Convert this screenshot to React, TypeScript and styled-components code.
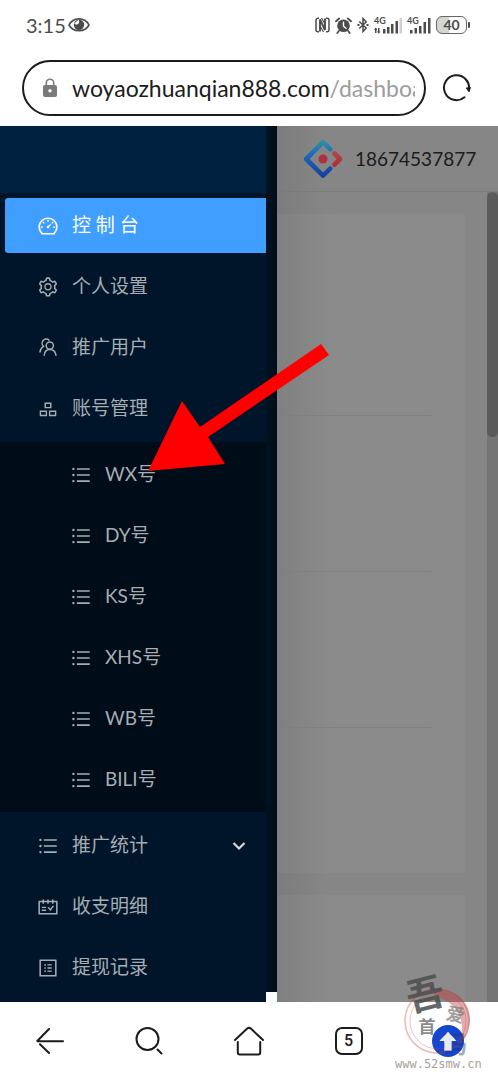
import React from "react";
import styled, { createGlobalStyle } from "styled-components";
import {
  AiOutlineDashboard,
  AiOutlineSetting,
  AiOutlineUnorderedList,
  AiOutlineSchedule,
  AiOutlineProfile,
} from "react-icons/ai";

const GlobalStyle = createGlobalStyle`
  * { box-sizing: border-box; }
  body {
    margin: 0;
    background: #fff;
    font-family: Lato, "Noto Sans CJK SC", sans-serif;
  }
  button { font: inherit; padding: 0; border: 0; background: none; cursor: pointer; }
  svg { display: block; flex: none; }
`;

const Screen = styled.div`
  position: relative;
  display: flex;
  flex-direction: column;
  min-height: 100vh;
  overflow: hidden;
`;

/* ---------- phone status bar ---------- */

const StatusBar = styled.div`
  display: flex;
  align-items: center;
  justify-content: space-between;
  height: 50px;
  padding: 0 28px 0 26px;
  color: #4c4c4c;
`;

const StatusGroup = styled.div<{ $gap: number }>`
  display: flex;
  align-items: center;
  gap: ${(p) => p.$gap}px;
`;

const Clock = styled.time`
  font-size: 20px;
  line-height: 24px;
`;

const Signal = styled.div<{ $width: number }>`
  position: relative;
  width: ${(p) => p.$width}px;
  height: 18px;
`;

const SignalLabel = styled.span`
  position: absolute;
  top: 0;
  left: 0;
  font: 700 9px/10px Lato, sans-serif;
`;

const Battery = styled.div`
  display: flex;
  align-items: center;
  gap: 1px;
  &::after {
    content: "";
    width: 2px;
    height: 6px;
    border-radius: 1px;
    background: #4c4c4c;
  }
`;

const BatteryBody = styled.span`
  width: 31px;
  height: 18px;
  border: 1px solid #666;
  border-radius: 6px;
  background: linear-gradient(90deg, #d4d4d4 40%, #fff 40%);
  font: 700 14px/16px Lato, sans-serif;
  text-align: center;
`;

/* ---------- browser address row ---------- */

const AddressRow = styled.header`
  display: flex;
  align-items: center;
  gap: 16px;
  height: 76px;
  padding: 0 26px 0 22px;
`;

const AddressBar = styled.button`
  display: flex;
  flex: 1;
  align-items: center;
  gap: 14px;
  min-width: 0;
  height: 56px;
  && {
    padding: 0 9px 0 18px;
    border: 2px solid #1c1c1c;
  }
  border-radius: 28px;
`;

const Url = styled.span`
  flex: 1;
  overflow: hidden;
  color: #9d9d9d;
  font-size: 23px;
  line-height: 30px;
  text-align: left;
  white-space: nowrap;
`;

const Domain = styled.span`
  color: #1c1c1c;
`;

/* ---------- page below the address row ---------- */

const Viewport = styled.div`
  display: flex;
  flex: 1;
  background: #868686;
`;

const Drawer = styled.aside`
  display: flex;
  flex: none;
  width: 277px;
  background: #001529;
`;

const DrawerPanel = styled.div`
  flex: 1;
`;

const DrawerLogo = styled.div`
  height: 67px;
  background: #002140;
`;

const DrawerTrack = styled.div`
  display: flex;
  flex-direction: column;
  justify-content: flex-end;
  width: 11px;
  background: linear-gradient(90deg, #001222, #000d19);
`;

const TrackCorner = styled.div`
  height: 10px;
  background: #f8fdff;
`;

const MenuList = styled.ul<{ $nested?: boolean }>`
  display: flex;
  flex-direction: column;
  gap: 6px;
  margin: 0;
  padding: ${(p) => (p.$nested ? "5px 0" : "5px 0 7px")};
  background: ${(p) => (p.$nested ? "#000c17" : "#001529")};
  list-style: none;
`;

const SubMenuSlot = styled.li``;

const MenuLink = styled.a<{ $active?: boolean; $nested?: boolean }>`
  display: flex;
  align-items: center;
  gap: 13px;
  height: 55px;
  margin-left: 5px;
  padding: 0 20px 0 ${(p) => (p.$nested ? 65 : 32)}px;
  border-radius: 3px 0 0 3px;
  background: ${(p) => (p.$active ? "#409eff" : "transparent")};
  color: ${(p) => (p.$active ? "#fff" : "#a6adb4")};
  font-size: 19px;
  line-height: 28px;
  text-decoration: none;
`;

const MenuText = styled.span`
  flex: 1;
  padding-bottom: 2px;
`;

const Main = styled.main`
  display: flex;
  flex: 1;
  flex-direction: column;
  min-width: 0;
  background: linear-gradient(90deg, #7c7c7c, #868686 48px);
`;

const MainHeader = styled.div`
  display: flex;
  align-items: center;
  gap: 12px;
  height: 66px;
  padding-left: 26px;
  border-bottom: 1px solid #7b7b7b;
`;

const Account = styled.span`
  color: #1b1b1b;
  font-size: 19px;
  line-height: 28px;
`;

const MainBody = styled.div`
  display: flex;
  flex: 1;
`;

const Cards = styled.div`
  display: flex;
  flex: 1;
  flex-direction: column;
  gap: 22px;
  padding: 22px 22px 0 0;
`;

const Card = styled.section<{ $fill?: boolean }>`
  flex: ${(p) => (p.$fill ? "1" : "none")};
  padding: ${(p) => (p.$fill ? "0" : "46px 34px 0 0")};
  background: linear-gradient(90deg, #808080, #8b8b8b 56px);
`;

const CardRow = styled.div<{ $last?: boolean }>`
  height: ${(p) => (p.$last ? 145 : 156)}px;
  border-bottom: ${(p) => (p.$last ? "0" : "1px solid #808080")};
`;

const PageTrack = styled.div`
  width: 11px;
  background: #757575;
`;

const PageThumb = styled.div`
  height: 245px;
  border-radius: 6px;
  background: #5b5b5b;
`;

/* ---------- bottom browser bar ---------- */

const BottomBar = styled.nav`
  display: grid;
  grid-template-columns: repeat(5, 1fr);
  height: 78px;
  background: #fff;
`;

const BottomButton = styled.button`
  display: flex;
  align-items: center;
  justify-content: center;
  color: #1c1c1c;
`;

const TabCount = styled.span`
  width: 28px;
  height: 28px;
  border: 2px solid #1c1c1c;
  border-radius: 7px;
  font: 500 16px/24px Roboto, sans-serif;
  text-align: center;
`;

/* ---------- things lying over the page ---------- */

const RedArrow = styled.svg`
  position: absolute;
  top: 340px;
  left: 145px;
  pointer-events: none;
`;

const Stamp = styled.svg`
  position: absolute;
  right: 10px;
  bottom: 4px;
  pointer-events: none;
`;

/* ---------- icons ---------- */

const PromoteUsersIcon = () => (
  <svg width="22" height="22" viewBox="-1 0 22 22" fill="none" stroke="currentColor" strokeWidth="1.5" strokeLinecap="round">
    <circle cx="11.800" cy="8.600" r="3.600" />
    <path d="M6.200 18.200c.3-3.600 2.600-5.800 5.600-5.800s5.700 2.200 6.200 5.800" />
    <path d="M11 3.100A3.700 3.700 0 1 0 5.500 9.300C3.500 10.500 2.200 12.300 2 15" />
  </svg>
);

const ClusterIcon = () => (
  <svg width="22" height="22" viewBox="-1 -1 22 22" fill="none" stroke="currentColor" strokeWidth="1.400">
    <path d="M7.200 4.200h5.600v4.400H7.200zM2.400 12.200h6v4.300h-6zM11.600 12.200h6v4.300h-6z" />
  </svg>
);

const ChevronIcon = () => (
  <svg width="14" height="14" viewBox="0 0 14 14" fill="none" stroke="#d5d9dc" strokeWidth="2.200">
    <path d="M1.500 4l5.500 5.500L12.500 4" />
  </svg>
);

const EyeIcon = () => (
  <svg width="22" height="18" viewBox="0 0 22 18">
    <path d="M1 9C5 .8 17 .8 21 9 17 16.500 5 16.500 1 9z" fill="none" stroke="#4c4c4c" strokeWidth="1.600" />
    <circle cx="11" cy="8.800" r="5.200" fill="#4c4c4c" />
    <path d="M10.500 3.800a3 3 0 0 1-.8 4.400 3 3 0 0 1-3.500-.6" fill="#fff" />
  </svg>
);

const NfcIcon = () => (
  <svg width="15" height="16" viewBox="0 0 15 16" fill="none" stroke="currentColor">
    <path d="M4 1.200H3A2 2 0 0 0 1 3.200v9.600a2 2 0 0 0 2 2h1M11 1.200h1a2 2 0 0 1 2 2v9.600a2 2 0 0 1-2 2h-1" strokeWidth="1.500" />
    <path d="M5 14.500V2.500l5 10.500V1.500" strokeWidth="1.900" />
    <path d="M6.500 1l3.500 6M5 9l3.500 6" strokeWidth="1.200" />
  </svg>
);

const AlarmIcon = () => (
  <svg width="17" height="17" viewBox="0 0 17 17" fill="none" stroke="currentColor" strokeLinecap="round">
    <circle cx="8.500" cy="8.800" r="6.300" fill="currentColor" stroke="none" />
    <path d="M1 4.300L4.200 1.500M16 4.300l-3.200-2.800M3.800 14l-1.500 2M13.200 14l1.500 2" strokeWidth="1.800" />
    <path d="M8.500 5.200v4l2.500 2" stroke="#fff" strokeWidth="1.400" />
  </svg>
);

const BluetoothIcon = () => (
  <svg width="12" height="16" viewBox="0 0 12 16" fill="none" stroke="currentColor" strokeWidth="1.500">
    <path d="M2.200 4.500l7 6.500L6 14.500v-13L9.200 5l-7 6.500" />
    <path d="M.5 8h2M9.500 8h2" strokeWidth="1.800" />
  </svg>
);

const SignalIcon = ({ weak }: { weak?: boolean }) => (
  <Signal $width={weak ? 28 : 24}>
    <SignalLabel>4G</SignalLabel>
    <svg width="28" height="18" viewBox="0 0 28 18" fill="currentColor">
      {weak ? (
        <>
          <path d="M1 12h1.500v5H1zM4 12h1.500v5H4zM0 14l1.700-2.500L3.500 14zM3 15.500h3.500L4.800 17.800z" />
          <path d="M9 13h2.500v4.500H9zM13 11h2.500v6.500H13zM17 8h2.500v9.500H17zM21.500 5H24v12.500h-2.500z" />
          <path d="M25.500 2H28v15.500h-2.500z" fill="#cfcfcf" />
        </>
      ) : (
        <path d="M3 14h2.500v3.500H3zM7.500 12H10v5.500H7.500zM12 10h2.500v7.500H12zM16.500 6H19v11.500h-2.500zM21 2h2.500v15.500H21z" />
      )}
    </svg>
  </Signal>
);

const LockIcon = () => (
  <svg width="16" height="20" viewBox="0 0 16 20">
    <path d="M4.300 8V5a3.700 3.700 0 0 1 7.400 0v3" fill="none" stroke="#7b7b7b" strokeWidth="1.600" />
    <rect x="1" y="7" width="14" height="12" rx="2" fill="#7b7b7b" />
    <circle cx="8" cy="12.800" r="1.700" fill="#fff" />
  </svg>
);

const ReloadIcon = () => (
  <svg width="30" height="30" viewBox="0 0 30 30" fill="none" stroke="#1c1c1c" strokeWidth="2" strokeLinecap="round">
    <path d="M22.500 24.300A12.500 12.500 0 1 1 26.800 17" />
    <path d="M24.500 15.300l2.600 3.500 1.200-4z" fill="#1c1c1c" strokeWidth="1" />
  </svg>
);

const BrandLogo = () => (
  <svg width="40" height="40" viewBox="0 0 40 40" fill="none" strokeWidth="4.600" strokeLinecap="round" strokeLinejoin="round">
    <defs>
      <linearGradient id="brandBlue" x1="20" y1="2" x2="20" y2="38" gradientUnits="userSpaceOnUse">
        <stop offset="0" stopColor="#2a92ac" />
        <stop offset=".4" stopColor="#1d66b8" />
        <stop offset="1" stopColor="#153f98" />
      </linearGradient>
      <linearGradient id="brandRed" x1="32" y1="12" x2="32" y2="28" gradientUnits="userSpaceOnUse">
        <stop offset="0" stopColor="#ae4a44" />
        <stop offset="1" stopColor="#ac2b3c" />
      </linearGradient>
    </defs>
    <path d="M27.200 10.200L20 3.200 3.200 20 20 36.600l7.200-7" stroke="url(#brandBlue)" />
    <path d="M31.500 14.500L37 20l-5.500 5.500" stroke="url(#brandRed)" />
    <circle cx="20" cy="20" r="4.500" fill="#b02f3e" />
  </svg>
);

const BackIcon = () => (
  <svg width="28" height="28" viewBox="0 0 28 28" fill="none" stroke="currentColor" strokeWidth="2" strokeLinecap="round">
    <path d="M1.500 14.300H27M13 2L1.300 14M4 17.200L13 26" />
  </svg>
);

const SearchIcon = () => (
  <svg width="28" height="28" viewBox="0 0 28 28" fill="none" stroke="currentColor" strokeWidth="2" strokeLinecap="round">
    <circle cx="12.500" cy="12" r="11" />
    <path d="M22.500 22.500L26.500 26.500" />
  </svg>
);

const HomeIcon = () => (
  <svg width="30" height="30" viewBox="0 0 30 30" fill="none" stroke="currentColor" strokeWidth="2" strokeLinecap="round" strokeLinejoin="round">
    <path d="M1 14L13.200 2.600q1.800-1.500 3.600 0L29 14" />
    <path d="M3.800 16v10.500q0 2 2 2h18.400q2 0 2-2V16" />
  </svg>
);

const UpIcon = () => (
  <svg width="32" height="32" viewBox="0 0 32 32">
    <circle cx="16" cy="16" r="16" fill="#1747d1" />
    <path d="M16 7l8.500 9h-5v9.500h-7V16h-5z" fill="#fff" />
  </svg>
);

const accounts = ["WX号", "DY号", "KS号", "XHS号", "WB号", "BILI号"];

type EntryProps = {
  icon: React.ReactNode;
  text: string;
  active?: boolean;
  nested?: boolean;
  arrow?: boolean;
};

const Entry = ({ icon, text, active, nested, arrow }: EntryProps) => (
  <li>
    <MenuLink href="#" $active={active} $nested={nested}>
      {icon}
      <MenuText>{text}</MenuText>
      {arrow && <ChevronIcon />}
    </MenuLink>
  </li>
);

export default function App() {
  return (
    <Screen>
      <GlobalStyle />
      <StatusBar>
        <StatusGroup $gap={2}>
          <Clock>3:15</Clock>
          <EyeIcon />
        </StatusGroup>
        <StatusGroup $gap={5}>
          <NfcIcon />
          <AlarmIcon />
          <BluetoothIcon />
          <SignalIcon weak />
          <SignalIcon />
          <Battery>
            <BatteryBody>40</BatteryBody>
          </Battery>
        </StatusGroup>
      </StatusBar>

      <AddressRow>
        <AddressBar type="button">
          <LockIcon />
          <Url>
            <Domain>woyaozhuanqian888.com</Domain>/dashboard
          </Url>
        </AddressBar>
        <button type="button" aria-label="刷新">
          <ReloadIcon />
        </button>
      </AddressRow>

      <Viewport>
        <Drawer>
          <DrawerPanel>
            <DrawerLogo />
            <MenuList>
              <Entry active icon={<AiOutlineDashboard size={22} />} text="控 制 台" />
              <Entry icon={<AiOutlineSetting size={22} />} text="个人设置" />
              <Entry icon={<PromoteUsersIcon />} text="推广用户" />
              <Entry icon={<ClusterIcon />} text="账号管理" />
              <SubMenuSlot>
                <MenuList $nested>
                  {accounts.map((name) => (
                    <Entry key={name} nested icon={<AiOutlineUnorderedList size={22} />} text={name} />
                  ))}
                </MenuList>
              </SubMenuSlot>
              <Entry arrow icon={<AiOutlineUnorderedList size={22} />} text="推广统计" />
              <Entry icon={<AiOutlineSchedule size={22} />} text="收支明细" />
              <Entry icon={<AiOutlineProfile size={22} />} text="提现记录" />
            </MenuList>
          </DrawerPanel>
          <DrawerTrack>
            <TrackCorner />
          </DrawerTrack>
        </Drawer>

        <Main>
          <MainHeader>
            <BrandLogo />
            <Account>18674537877</Account>
          </MainHeader>
          <MainBody>
            <Cards>
              <Card>
                <CardRow />
                <CardRow />
                <CardRow />
                <CardRow $last />
              </Card>
              <Card $fill />
            </Cards>
            <PageTrack>
              <PageThumb />
            </PageTrack>
          </MainBody>
        </Main>
      </Viewport>

      <BottomBar>
        <BottomButton type="button" aria-label="后退">
          <BackIcon />
        </BottomButton>
        <BottomButton type="button" aria-label="搜索">
          <SearchIcon />
        </BottomButton>
        <BottomButton type="button" aria-label="主页">
          <HomeIcon />
        </BottomButton>
        <BottomButton type="button">
          <TabCount>5</TabCount>
        </BottomButton>
        <BottomButton type="button" aria-label="菜单">
          <UpIcon />
        </BottomButton>
      </BottomBar>

      <RedArrow width="190" height="140" viewBox="145 340 190 140">
        <path d="M148 471L182 401l18 26L321 344l8 11-121 82 17 27z" fill="#f00" />
      </RedArrow>

      <Stamp width="98" height="126" viewBox="390 950 98 126">
        <g fill="none" stroke="#c03b3b">
          <circle cx="437" cy="1021" r="32" strokeWidth="1.500" opacity=".35" />
          <circle cx="438" cy="1021" r="28" strokeWidth="1" opacity=".3" />
          <path d="M434 990c22-3 37 13 36 31-1 10-5 18-11 23 7-18 3-41-25-48z" fill="#c03b3b" stroke="none" opacity=".42" />
        </g>
        <g fontFamily="'Noto Sans CJK SC', sans-serif" fontWeight="700" textAnchor="middle">
          <text x="425" y="1008" fontSize="38" fill="#4d4d4d" opacity=".85" transform="rotate(-14 425 994)">吾</text>
          <text x="427" y="1033" fontSize="17" fill="#777" opacity=".85">首</text>
          <text x="455" y="1021" fontSize="18" fill="#777" opacity=".7" transform="rotate(12 455 1016)">爱</text>
          <text x="455" y="1053" fontSize="24" fill="#1b3568" opacity=".4">码</text>
        </g>
        <path d="M448 1032l8.500 9h-5v9.500h-7V1041h-5z" fill="#e9e9ee" />
        <text x="395" y="1068" fontFamily="'DejaVu Sans Mono', monospace" fontSize="12" fill="#a6a29d">www.52smw.cn</text>
      </Stamp>
    </Screen>
  );
}
